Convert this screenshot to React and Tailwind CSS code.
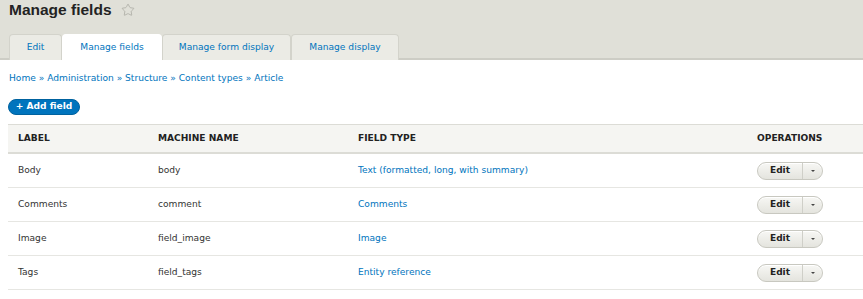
import { Star } from 'lucide-react';

const rows = [
  { label: 'Body', machine: 'body', type: 'Text (formatted, long, with summary)' },
  { label: 'Comments', machine: 'comment', type: 'Comments' },
  { label: 'Image', machine: 'field_image', type: 'Image' },
  { label: 'Tags', machine: 'field_tags', type: 'Entity reference' },
];

const tabs = [
  { name: 'Edit', w: 'w-[53px]' },
  { name: 'Manage fields', w: 'w-[100px]', active: true },
  { name: 'Manage form display', w: 'w-[129px]' },
  { name: 'Manage display', w: 'w-[108px]' },
];

function EditButton() {
  return (
    <div className="flex items-center h-[18px] w-[66px] rounded-full border border-[#c8c8c0] bg-gradient-to-b from-[#f7f7f4] to-[#e4e4de] shadow-[inset_0_1px_0_#fff]">
      <span className="flex-1 text-center font-bold text-[#222] text-[9px]">Edit</span>
      <span className="h-full w-px bg-[#cfcfc8]" />
      <span className="w-[19px] flex items-center justify-center">
        <span className="block w-0 h-0 border-l-[2px] border-r-[2px] border-t-[2px] border-l-transparent border-r-transparent border-t-[#444]" />
      </span>
    </div>
  );
}

export default function App() {
  return (
    <div className="w-[863px] h-[299px] overflow-hidden bg-white text-[#333] text-[9.1px]" style={{ fontFamily: '"DejaVu Sans", sans-serif' }}>

      {/* Header */}
      <div className="bg-[#e0e0d8] border-b-2 border-[#cdcdc5]">
        <div className="flex items-center gap-[9px] pl-[9px] h-[20px]">
          <h1 className="text-[15.5px] font-bold text-[#232323] leading-none" style={{ fontFamily: '"Liberation Sans", Arial, sans-serif' }}>Manage fields</h1>
          <Star className="h-[14px] w-[14px] text-[#a8a8a0]" strokeWidth={1.3} />
        </div>
        <div className="flex pl-[9px] mt-[14px] -mb-[2px]">
          {tabs.map(t => (
            <div
              key={t.name}
              className={`${t.w} h-[26px] flex items-center justify-center rounded-t-[4px] border border-b-0 text-[#0074bd] ${t.active ? 'bg-white border-white' : 'bg-[#ebebe5] border-[#d3d3cb]'}`}
            >
              {t.name}
            </div>
          ))}
        </div>
      </div>

      {/* Content */}
      <div className="pl-[8px]">
        <div className="mt-[12px] pl-px text-[#0074bd] leading-[12px]">
          Home » Administration » Structure » Content types » Article
        </div>

        <button className="mt-[15px] h-[16px] w-[72px] rounded-full bg-[#0074bd] border border-[#00629f] text-white font-bold text-[9.1px] leading-none">
          + Add field
        </button>

        <div className="mt-[9px]">
          <div className="grid grid-cols-[140px_200px_399px_1fr] h-[30px] items-center bg-[#f5f5f2] border-t border-b-2 border-[#dcdcd6] font-bold text-[#222] uppercase">
            <div className="pl-[10px]">Label</div>
            <div className="pl-[10px]">Machine name</div>
            <div className="pl-[10px]">Field type</div>
            <div className="pl-[10px]">Operations</div>
          </div>
          {rows.map(r => (
            <div key={r.label} className="grid grid-cols-[140px_200px_399px_1fr] h-[34px] items-center border-b border-[#e6e6e2]">
              <div className="pl-[10px]">{r.label}</div>
              <div className="pl-[10px]">{r.machine}</div>
              <div className="pl-[10px] text-[#0074bd]">{r.type}</div>
              <div className="pl-[10px]"><EditButton /></div>
            </div>
          ))}
        </div>
      </div>
    </div>
  );
}
